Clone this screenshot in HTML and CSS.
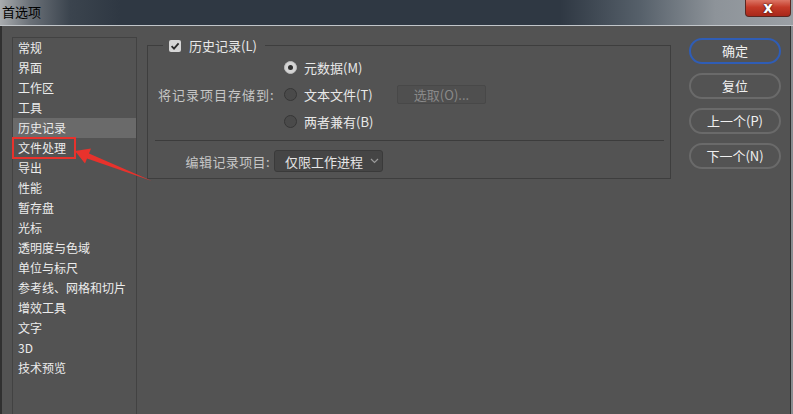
FILE: index.html
```html
<!DOCTYPE html>
<html>
<head>
  <title>首选项</title>
  <meta name="viewport" content="width=device-width, initial-scale=1">
  <link rel="stylesheet" href="styles.css">
</head>
<body>
  <div class="window">
    <div class="titlebar">
      <span class="title">首选项</span>
      <button class="close">x</button>
    </div>

    <div class="content">
      <ul class="nav">
        <li>常规</li>
        <li>界面</li>
        <li>工作区</li>
        <li>工具</li>
        <li class="active">历史记录</li>
        <li>文件处理</li>
        <li>导出</li>
        <li>性能</li>
        <li>暂存盘</li>
        <li>光标</li>
        <li>透明度与色域</li>
        <li>单位与标尺</li>
        <li>参考线、网格和切片</li>
        <li>增效工具</li>
        <li>文字</li>
        <li>3D</li>
        <li>技术预览</li>
      </ul>

      <fieldset class="group">
        <legend>
          <span class="check">
            <svg width="12" height="12" viewBox="0 0 12 12"><path d="M2.6 6.2 L5 8.6 L9.6 3.4" fill="none" stroke="#2b2b2b" stroke-width="1.8"/></svg>
          </span>
          历史记录(L)
        </legend>

        <div class="store-row">
          <span class="label wide">将记录项目存储到:</span>
          <div class="radios">
            <div class="radio"><span class="dot on"></span>元数据(M)</div>
            <div class="radio"><span class="dot"></span>文本文件(T)</div>
            <div class="radio"><span class="dot"></span>两者兼有(B)</div>
          </div>
          <button class="pick" disabled>选取(O)...</button>
        </div>

        <hr class="sep">

        <div class="edit-row">
          <span class="label">编辑记录项目:</span>
          <div class="select">
            仅限工作进程
            <svg width="9" height="6" viewBox="0 0 9 6"><path d="M1 1 L4.5 4.5 L8 1" fill="none" stroke="#9a9a9a" stroke-width="1.2"/></svg>
          </div>
        </div>
      </fieldset>

      <div class="actions">
        <button class="btn primary">确定</button>
        <button class="btn">复位</button>
        <button class="btn">上一个(P)</button>
        <button class="btn">下一个(N)</button>
      </div>
    </div>

    <svg class="annot" width="793" height="414" viewBox="0 0 793 414">
      <rect x="13" y="138" width="62" height="20" fill="none" stroke="#e8322c" stroke-width="2"/>
      <polygon points="75,151 91,148.4 89,153.6 152,181 87,158.4 85,163.6" fill="#e8322c"/>
    </svg>
  </div>
</body>
</html>
```

FILE: styles.css
```css
body { margin: 0; background: #535353; font-family: "Noto Sans CJK SC", "Noto Sans", sans-serif; }
.window { width: 793px; height: 414px; overflow: hidden; position: relative; display: flex; flex-direction: column; background: #8a8e92; }

.titlebar { height: 25px; flex-shrink: 0; display: flex; align-items: flex-start; border-bottom: 1px solid #c2c6ca;
  background: linear-gradient(90deg, #a9acaf 0, #6b7178 30px, #3b444e 70px, #2f3843 120px, #2f3843 560px, #56606a 640px, #8d9399 715px, #9ba0a5 793px); }
.title { font-size: 13px; line-height: 24px; color: #000; padding-left: 2px; }
.close { margin-left: auto; margin-right: 2px; width: 46px; height: 17px; padding: 0; border: 1px solid #5a2620; border-top: none; border-radius: 0 0 4px 4px;
  background: linear-gradient(#dc7565, #c43a28 45%, #a8281a); color: #fff; font: bold 15px/14px "DejaVu Sans", sans-serif; text-shadow: 0 0 2px #3a0f0a, 0 0 1px #3a0f0a; }

.content { flex: 1; display: flex; align-items: flex-start; background: #535353; margin-right: 2px; border-left: 2px solid #303030; border-right: 1px solid #303030; padding: 11px 0 0 10px; }

.nav { list-style: none; margin: 0; padding: 0; width: 125px; height: 400px; box-sizing: border-box; border: 1px solid #424242; flex-shrink: 0; }
.nav li { font-size: 12px; line-height: 20px; height: 20px; color: #ececec; padding-left: 5px; white-space: nowrap; }
.nav li.active { background: #6a6a6a; }

.group { width: 524px; box-sizing: border-box; margin: 2px 0 0 10px; padding: 2px 6px 6px 7px; border: 1px solid #3e3e3e; min-width: 0; flex-shrink: 0; }
.group legend { display: flex; align-items: center; gap: 8px; margin-left: 8px; padding: 0 8px 0 6px; font-size: 13px; line-height: 13px; height: 13px; color: #e8e8e8; }
.check { width: 12px; height: 12px; background: #d6d6d6; border-radius: 2px; display: flex; }

.label { width: 112px; text-align: right; font-size: 13px; color: #c6c6c6; flex-shrink: 0; white-space: nowrap; letter-spacing: 0.4px; }
.label.wide { letter-spacing: 1px; }
.store-row { display: flex; align-items: center; padding-left: 3px; }
.store-row .label { margin-right: 14px; }
.radios { display: flex; flex-direction: column; width: 113px; }
.radio { height: 27px; display: flex; align-items: center; gap: 7px; font-size: 13px; color: #e8e8e8; white-space: nowrap; }
.dot { width: 13px; height: 13px; box-sizing: border-box; border-radius: 50%; border: 1.5px solid #363636; background: #4a4a4a; flex-shrink: 0; display: flex; align-items: center; justify-content: center; }
.dot.on { background: #d4d4d4; border: 1px solid #bdbdbd; }
.dot.on::after { content: ""; width: 5px; height: 5px; border-radius: 50%; background: #2e2e2e; }
.pick { width: 89px; height: 19px; padding: 0; background: #4f4f4f; border: 1px solid #484848; border-radius: 2px; color: #8a8a8a; font: 13px/17px "Noto Sans CJK SC", sans-serif; }

.sep { border: 0; border-top: 1px solid #3c3c3c; margin: 5px 0 9px; }

.edit-row { display: flex; align-items: center; padding-left: 3px; }
.edit-row .label { margin-right: 4px; }
.select { width: 109px; height: 22px; box-sizing: border-box; display: flex; align-items: center; justify-content: space-between; padding: 0 3px 0 10px; background: #454545; border: 1px solid #3a3a3a; border-radius: 3px; font-size: 13px; color: #e6e6e6; white-space: nowrap; }

.actions { display: flex; flex-direction: column; gap: 9px; margin: 1px 0 0 18px; }
.btn { width: 92px; height: 26px; padding: 0; border: 2px solid #6a6a6a; border-radius: 13px; background: #535353; color: #f0f0f0; font: 13px/22px "Noto Sans CJK SC", sans-serif; }
.btn.primary { border-color: #2f5db6; }

.annot { position: absolute; top: 0; left: 0; pointer-events: none; }
```
